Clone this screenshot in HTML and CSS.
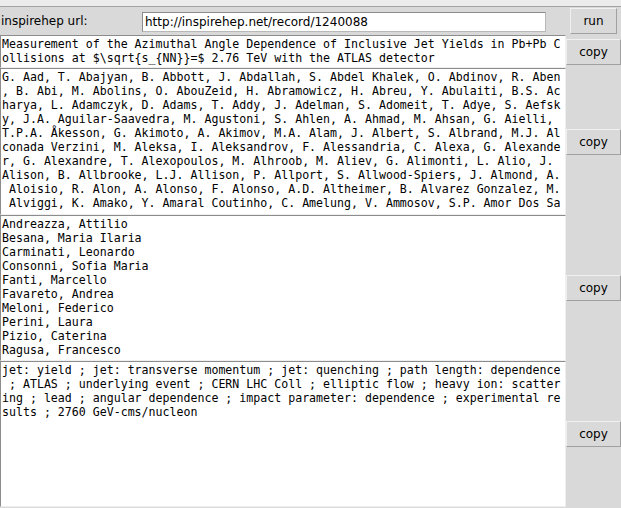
FILE: index.html
```html
<!DOCTYPE html>
<html>
<head>
<meta charset="utf-8">
<link rel="stylesheet" href="styles.css">
</head>
<body>
<div class="topstrip"></div>
<div class="urlrow">
  <span class="label">inspirehep url:</span>
  <div class="entry">http://inspirehep.net/record/1240088</div>
  <div class="btn run">run</div>
</div>
<div class="row r1">
  <div class="text">Measurement of the Azimuthal Angle Dependence of Inclusive Jet Yields in Pb+Pb C
ollisions at $\sqrt{s_{NN}}=$ 2.76 TeV with the ATLAS detector</div>
  <div class="side"><div class="btn copy">copy</div></div>
</div>
<div class="row r2">
  <div class="text">G. Aad, T. Abajyan, B. Abbott, J. Abdallah, S. Abdel Khalek, O. Abdinov, R. Aben
, B. Abi, M. Abolins, O. AbouZeid, H. Abramowicz, H. Abreu, Y. Abulaiti, B.S. Ac
harya, L. Adamczyk, D. Adams, T. Addy, J. Adelman, S. Adomeit, T. Adye, S. Aefsk
y, J.A. Aguilar-Saavedra, M. Agustoni, S. Ahlen, A. Ahmad, M. Ahsan, G. Aielli, 
T.P.A. Åkesson, G. Akimoto, A. Akimov, M.A. Alam, J. Albert, S. Albrand, M.J. Al
conada Verzini, M. Aleksa, I. Aleksandrov, F. Alessandria, C. Alexa, G. Alexande
r, G. Alexandre, T. Alexopoulos, M. Alhroob, M. Aliev, G. Alimonti, L. Alio, J. 
Alison, B. Allbrooke, L.J. Allison, P. Allport, S. Allwood-Spiers, J. Almond, A.
 Aloisio, R. Alon, A. Alonso, F. Alonso, A.D. Altheimer, B. Alvarez Gonzalez, M.
 Alviggi, K. Amako, Y. Amaral Coutinho, C. Amelung, V. Ammosov, S.P. Amor Dos Sa</div>
  <div class="side"><div class="btn copy">copy</div></div>
</div>
<div class="row r3">
  <div class="text">Andreazza, Attilio
Besana, Maria Ilaria
Carminati, Leonardo
Consonni, Sofia Maria
Fanti, Marcello
Favareto, Andrea
Meloni, Federico
Perini, Laura
Pizio, Caterina
Ragusa, Francesco</div>
  <div class="side"><div class="btn copy">copy</div></div>
</div>
<div class="row r4">
  <div class="text">jet: yield ; jet: transverse momentum ; jet: quenching ; path length: dependence
 ; ATLAS ; underlying event ; CERN LHC Coll ; elliptic flow ; heavy ion: scatter
ing ; lead ; angular dependence ; impact parameter: dependence ; experimental re
sults ; 2760 GeV-cms/nucleon</div>
  <div class="side"><div class="btn copy">copy</div></div>
</div>
</body>
</html>
```
FILE: styles.css
```css
html, body {
  margin: 0;
  padding: 0;
}
body {
  background: #d9d9d9;
  width: 621px;
  height: 508px;
  overflow: hidden;
  font-family: "DejaVu Sans", sans-serif;
  font-size: 12px;
  color: #000;
}
.topstrip {
  height: 6px;
  background: #ececec;
  border-bottom: 1px solid #a3a3a3;
}
.urlrow {
  display: flex;
  align-items: center;
  height: 28px;
}
.label {
  width: 141px;
  padding-left: 1px;
}
.entry {
  width: 398px;
  height: 16px;
  line-height: 16px;
  background: #fff;
  border: 1px solid #b8b8b8;
  border-top-color: #8c8c8c;
  border-left-color: #8c8c8c;
  padding: 1px 2px;
  font-size: 12px;
  margin-top: 1px;
}
.btn {
  box-sizing: border-box;
  height: 26px;
  line-height: 24px;
  text-align: center;
  background: #d9d9d9;
  border: 1px solid #a0a0a0;
  border-top-color: #f0f0f0;
  border-left-color: #f0f0f0;
  font-size: 12px;
}
.run {
  width: 47px;
  margin-left: 24px;
}
.row {
  display: flex;
}
.text {
  box-sizing: border-box;
  width: 566px;
  background: #fff;
  border: 1px solid #efefef;
  border-top-color: #8c8c8c;
  border-left-color: #8c8c8c;
  padding: 1px 1px;
  font-family: "DejaVu Sans Mono", monospace;
  font-size: 11.6px;
  line-height: 14px;
  white-space: pre;
  overflow: hidden;
}
.side {
  width: 55px;
  display: flex;
  align-items: center;
}
.copy {
  width: 55px;
}
.r1 { height: 33px; }
.r2 { height: 147px; }
.r3 { height: 146px; }
.r4 { height: 146px; }
```
